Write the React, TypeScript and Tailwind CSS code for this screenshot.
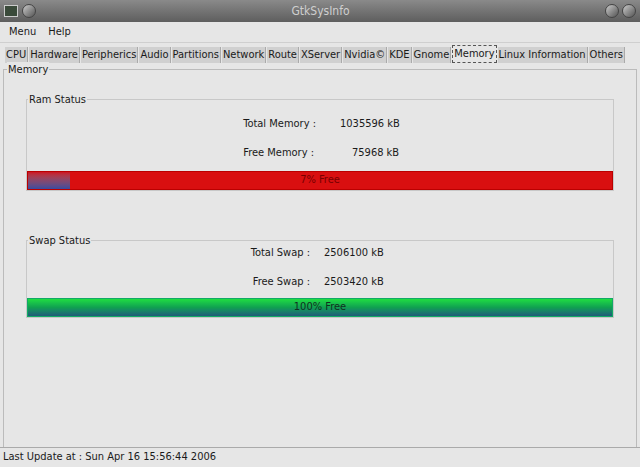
export default function App() {
  const tabs = ["CPU","Hardware","Peripherics","Audio","Partitions","Network","Route","XServer","Nvidia©","KDE","Gnome","Memory","Linux Information","Others"];
  return (
    <div className="w-[640px] h-[467px] bg-[#e6e6e6] flex flex-col text-[11px] text-[#1a1a1a] overflow-hidden" style={{fontFamily:'"DejaVu Sans Condensed", "Liberation Sans", sans-serif'}}>
      <div className="h-[22px] bg-gradient-to-b from-[#8a8a8a] to-[#5e5e5e] flex items-center px-1 relative">
        <div className="w-[14px] h-[12px] bg-[#3a4a3a] border border-[#ccc] mr-1" />
        <div className="w-[14px] h-[14px] rounded-full bg-gradient-to-br from-[#ccc] to-[#555] border border-[#444]" />
        <div className="flex-1 text-center text-[#cfcfcf] text-[12px]">GtkSysInfo</div>
        <div className="w-[14px] h-[14px] rounded-full bg-gradient-to-br from-[#ccc] to-[#555] border border-[#444] mr-[3px]" />
        <div className="w-[14px] h-[14px] rounded-full bg-gradient-to-br from-[#ccc] to-[#555] border border-[#444]" />
      </div>
      <div className="h-[21px] flex items-center gap-[12px] px-[9px] text-[11px] border-b border-[#cfcfcf]">
        <span>Menu</span><span>Help</span>
      </div>
      <div className="flex items-end h-[18px] px-[5px] gap-[1px] mt-[2px] whitespace-nowrap">
        {tabs.map(t => (
          <div key={t} className={t==="Memory" ? "h-[18px] px-[1px] bg-[#e6e6e6] border border-dashed border-[#555] leading-[15px]" : "h-[16px] px-[1px] bg-[#d0d0d0] border-r border-[#aaa] leading-[15px]"}>{t}</div>
        ))}
      </div>
      <div className="flex-1 mx-[3px] mt-[6px] border-t border-l border-r border-[#bbb] relative flex flex-col">
        <div className="absolute -top-[8px] left-[3px] bg-[#e6e6e6] px-[1px]">Memory</div>
        <div className="mt-[29px] mx-[22px] border border-[#c8c8c8] relative h-[92px] flex flex-col">
          <div className="absolute -top-[8px] left-[1px] bg-[#e6e6e6] px-[1px]">Ram Status</div>
          <div className="grid grid-cols-[292px_1fr] mt-[16px] gap-y-[12px]">
            <div className="text-right pr-[3px]">Total Memory :</div><div className="pl-[21px]">1035596 kB</div>
            <div className="text-right pr-[5px]">Free Memory :</div><div className="pl-[33px]">75968 kB</div>
          </div>
          <div className="mt-auto h-[19px] bg-[#d90f10] relative flex items-center justify-center border border-[#b00] text-[#700]">
            <div className="absolute left-0 top-0 bottom-0 w-[42px] bg-gradient-to-b from-[#cc1020] to-[#3a4aa0]" />
            <span className="relative">7% Free</span>
          </div>
        </div>
        <div className="mt-[49px] mx-[22px] border border-[#c8c8c8] relative h-[78px] flex flex-col">
          <div className="absolute -top-[8px] left-[1px] bg-[#e6e6e6] px-[1px]">Swap Status</div>
          <div className="grid grid-cols-[288px_1fr] mt-[4px] gap-y-[12px]">
            <div className="text-right pr-[5px]">Total Swap :</div><div className="pl-[9px]">2506100 kB</div>
            <div className="text-right pr-[5px]">Free Swap :</div><div className="pl-[9px]">2503420 kB</div>
          </div>
          <div className="mt-auto h-[19px] bg-gradient-to-b from-[#20dd40] via-[#10a050] to-[#205a78] flex items-center justify-center text-[#103020] border border-[#1a6]">100% Free</div>
        </div>
      </div>
      <div className="h-[20px] border-t border-[#aaa] px-[3px] flex items-center text-[11px]">Last Update at : Sun Apr 16 15:56:44 2006</div>
    </div>
  );
}
